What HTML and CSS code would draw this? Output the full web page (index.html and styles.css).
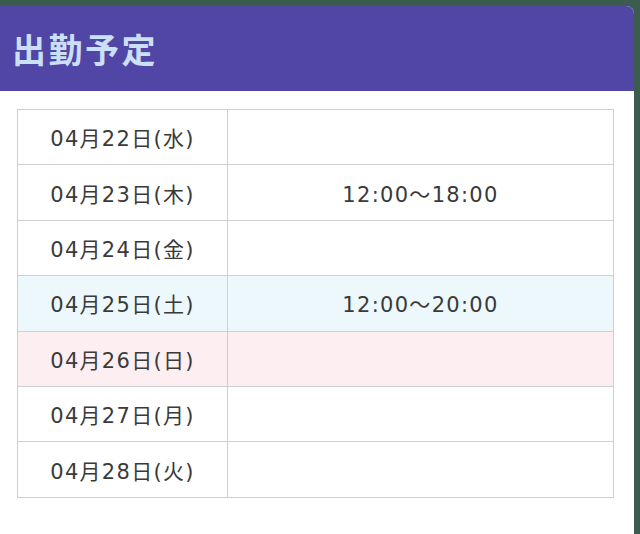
FILE: index.html
```html
<!DOCTYPE html>
<html lang="ja">
<head>
<meta charset="utf-8">
<link rel="stylesheet" href="styles.css">
</head>
<body>
<div class="card">
  <div class="head"><h1 class="title">出勤予定</h1></div>
  <div class="body">
    <table class="sched">
      <tr><td class="day">04月22日(水)</td><td class="time"></td></tr>
      <tr><td class="day">04月23日(木)</td><td class="time">12:00〜18:00</td></tr>
      <tr><td class="day">04月24日(金)</td><td class="time"></td></tr>
      <tr class="sat"><td class="day">04月25日(土)</td><td class="time">12:00〜20:00</td></tr>
      <tr class="sun"><td class="day">04月26日(日)</td><td class="time"></td></tr>
      <tr><td class="day">04月27日(月)</td><td class="time"></td></tr>
      <tr><td class="day">04月28日(火)</td><td class="time"></td></tr>
    </table>
  </div>
</div>
</body>
</html>
```
FILE: styles.css
```css
html, body { margin: 0; padding: 0; }
body {
  background: #3d5c50;
  width: 640px;
  height: 534px;
  overflow: hidden;
  padding-top: 6px;
  box-sizing: border-box;
  font-family: "Noto Sans CJK JP", "Noto Sans", sans-serif;
}
.card {
  width: 634px;
  height: 528px;
  background: #fff;
  border-top-right-radius: 8px;
  overflow: hidden;
}
.head {
  background: #5146a6;
  height: 85px;
  display: flex;
  align-items: center;
  padding-left: 12px;
}
.title {
  margin: 0;
  color: #cbdff7;
  font-size: 34px;
  font-weight: 700;
  letter-spacing: 2.5px;
  line-height: 1;
}
.body { padding: 18px 21px 0 17px; }
.sched {
  width: 597px;
  border-collapse: collapse;
  color: #3a3a3a;
  font-family: "DejaVu Sans", "Noto Sans CJK JP", sans-serif;
  font-size: 21px;
  letter-spacing: 1.3px;
}
.sched td {
  border: 1.5px solid #cfcfcf;
  height: 54.4px;
  padding: 0;
  text-align: center;
  vertical-align: middle;
}
.sched .day { width: 209px; }
.sat td { background: #edf8fc; }
.sun td { background: #fdeff1; }
```
